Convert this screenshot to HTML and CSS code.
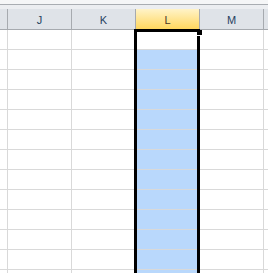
FILE: index.html
```html
<!DOCTYPE html>
<html lang="en">
<head>
    <meta charset="UTF-8">
    <title>Sheet</title>
    <link rel="stylesheet" href="styles.css">
</head>
<body>
    <div class="sheet">
        <div class="edge"></div>
        <div class="heads">
            <div class="hd cut"></div>
            <div class="hd">J</div>
            <div class="hd">K</div>
            <div class="hd on">L</div>
            <div class="hd">M</div>
            <div class="hd rest"></div>
        </div>
        <div class="grid">
            <div class="row"><div class="c cut"></div><div class="c"></div><div class="c"></div><div class="c"></div><div class="c"></div><div class="c rest"></div></div>
            <div class="row"><div class="c cut"></div><div class="c"></div><div class="c"></div><div class="c sel"></div><div class="c"></div><div class="c rest"></div></div>
            <div class="row"><div class="c cut"></div><div class="c"></div><div class="c"></div><div class="c sel"></div><div class="c"></div><div class="c rest"></div></div>
            <div class="row"><div class="c cut"></div><div class="c"></div><div class="c"></div><div class="c sel"></div><div class="c"></div><div class="c rest"></div></div>
            <div class="row"><div class="c cut"></div><div class="c"></div><div class="c"></div><div class="c sel"></div><div class="c"></div><div class="c rest"></div></div>
            <div class="row"><div class="c cut"></div><div class="c"></div><div class="c"></div><div class="c sel"></div><div class="c"></div><div class="c rest"></div></div>
            <div class="row"><div class="c cut"></div><div class="c"></div><div class="c"></div><div class="c sel"></div><div class="c"></div><div class="c rest"></div></div>
            <div class="row"><div class="c cut"></div><div class="c"></div><div class="c"></div><div class="c sel"></div><div class="c"></div><div class="c rest"></div></div>
            <div class="row"><div class="c cut"></div><div class="c"></div><div class="c"></div><div class="c sel"></div><div class="c"></div><div class="c rest"></div></div>
            <div class="row"><div class="c cut"></div><div class="c"></div><div class="c"></div><div class="c sel"></div><div class="c"></div><div class="c rest"></div></div>
            <div class="row"><div class="c cut"></div><div class="c"></div><div class="c"></div><div class="c sel"></div><div class="c"></div><div class="c rest"></div></div>
            <div class="row"><div class="c cut"></div><div class="c"></div><div class="c"></div><div class="c sel"></div><div class="c"></div><div class="c rest"></div></div>
            <div class="row"><div class="c cut"></div><div class="c"></div><div class="c"></div><div class="c sel"></div><div class="c"></div><div class="c rest"></div></div>
        </div>
        <!-- selection outline + fill handle sit over the grid -->
        <div class="selection"></div>
        <div class="handle"></div>
    </div>
</body>
</html>
```

FILE: styles.css
```css
*{
    margin: 0;
    padding: 0;
    box-sizing: border-box;
}
body{
    background: #fff;
    font-family: "Liberation Sans", Arial, sans-serif;
}
.sheet{
    position: relative;
    width: 268px;
    height: 273px;
    overflow: hidden;
}
.edge{
    height: 9px;
    background: #eceef1;
    border-top: 4px solid #f5f6f7;
    border-bottom: 0;
    box-shadow: inset 0 1px 0 #a9adb2;
}
.heads{
    display: flex;
    height: 21px;
    background: #dfe3e8;
    border-bottom: 1px solid #a6aaaf;
}
.hd{
    flex: none;
    width: 64px;
    border-right: 1px solid #a6aaaf;
    text-align: center;
    font-size: 11px;
    line-height: 17px;
    padding-top: 3px;
    color: #27415f;
}
.hd.cut{
    width: 8px;
}
.hd.rest{
    flex: 1;
    border-right: 0;
}
.hd.on{
    background: linear-gradient(#fff3c8, #ffd75e);
    color: #4a3526;
}
.grid{
    display: flex;
    flex-direction: column;
}
.row{
    display: flex;
    height: 20px;
    flex: none;
}
.c{
    flex: none;
    width: 64px;
    border-right: 1px solid #d9d9d9;
    border-bottom: 1px solid #d9d9d9;
}
.c.cut{
    width: 8px;
}
.c.rest{
    flex: 1;
    border-right: 0;
}
.c.sel{
    background: #b9d8fc;
}
.selection{
    position: absolute;
    left: 134px;
    top: 29px;
    width: 66px;
    height: 260px;
    border: 3px solid #000;
}
.handle{
    position: absolute;
    left: 197px;
    top: 30px;
    width: 5px;
    height: 5px;
    background: #000;
    box-shadow: 0 1px 0 #fff;
}
```
